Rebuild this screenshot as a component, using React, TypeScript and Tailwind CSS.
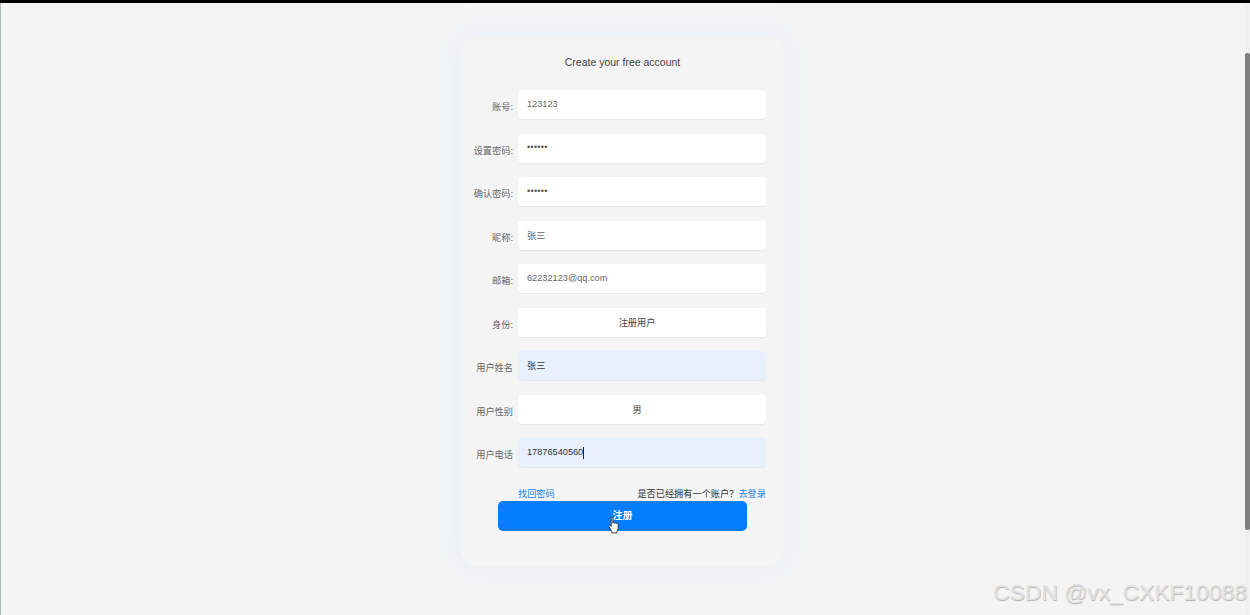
const fontStack = "font-['Liberation_Sans','Noto_Sans_CJK_SC',sans-serif]";

const rows = [
  { label: "账号:", value: "123123", kind: "text" },
  { label: "设置密码:", value: "••••••", kind: "password" },
  { label: "确认密码:", value: "••••••", kind: "password" },
  { label: "昵称:", value: "张三", kind: "text", cjk: true },
  { label: "邮箱:", value: "62232123@qq.com", kind: "text" },
  { label: "身份:", value: "注册用户", kind: "select", cjk: true },
  { label: "用户姓名", value: "张三", kind: "filled", cjk: true },
  { label: "用户性别", value: "男", kind: "select", cjk: true },
  { label: "用户电话", value: "17876540560", kind: "filled", caret: true },
];

function Row({ label, value, kind, caret, cjk }: { label: string; value: string; kind: string; caret?: boolean; cjk?: boolean }) {
  const box =
    kind === "filled"
      ? "bg-[#e8f0fe] text-[#333333] px-[9px]"
      : kind === "select"
        ? "bg-white text-[#444444] justify-center pr-[10px]"
        : "bg-white text-[#666666] px-[9px]";
  return (
    <div className="flex items-center h-[29px]">
      <span className="w-[58px] pr-[5px] pt-[7px] text-right text-[9.2px] leading-none whitespace-nowrap text-[#666666]">{label}</span>
      <div className={`w-[248px] h-[29px] flex items-center rounded-[4px] text-[9.2px] shadow-[0_1px_1px_#e4e9f0] ${box}`}>
        <span className={kind === "password" ? "text-[9px] tracking-[0.3px] text-[#555555]" : cjk ? "pt-[3px]" : ""}>{value}</span>
        {caret && <span className="w-px h-[12px] bg-[#222222]" />}
      </div>
    </div>
  );
}

function HandCursor() {
  return (
    <svg width="12" height="19" viewBox="0 0 12 18" className="absolute left-[110px] top-[15px]">
      <path
        d="M3.2 1.6c0-1.1 1.7-1.1 1.7 0v5.2c.2-1 1.7-1 1.8 0 .2-.8 1.6-.8 1.7.2.3-.7 1.6-.6 1.7.4v4.2c0 1.7-.7 2.6-1.2 3.6v1.2H3.8v-1.3L1 10.2c-.6-1 .6-2 1.5-1.1l.7.9z"
        fill="#ffffff"
        stroke="#333333"
        strokeWidth="0.9"
        strokeLinejoin="round"
      />
    </svg>
  );
}

export default function App() {
  return (
    <div className={`h-[615px] w-[1250px] overflow-hidden flex flex-col bg-[#f4f4f4] ${fontStack}`}>
      <div className="h-[3px] shrink-0 bg-black" />
      <div className="flex-1 flex min-h-0">
        <div className="w-px shrink-0 bg-[#a9bfae]" />
        <main className="relative flex-1 flex justify-center pt-[33px] pr-[1px]">
          <div className="w-[325px] h-[530px] rounded-[18px] bg-[#f4f4f4] shadow-[0_0_22px_10px_#edf1f5] pt-[20px]">
            <h1 className="text-center text-[10.5px] leading-[13px] text-[#444444]">Create your free account</h1>
            <div className="mt-[21px] flex flex-col gap-[14.5px]">
              {rows.map((row) => (
                <Row key={row.label} {...row} />
              ))}
            </div>
            <div className="mt-[22px] ml-[58px] w-[248px] flex justify-between text-[9.2px] leading-[11px]">
              <span className="text-[#1a86e8]">找回密码</span>
              <span className="text-[#333333]">
                是否已经拥有一个账户？<span className="text-[#1a86e8]">去登录</span>
              </span>
            </div>
            <button className="relative mt-[1px] ml-[38px] block w-[249px] h-[30px] pb-[2px] rounded-[5px] bg-[#057dfd] text-white text-[10px] font-bold">
              注册
              <HandCursor />
            </button>
          </div>
          <span className="absolute right-[-2px] bottom-[9px] text-[22.8px] leading-[28px] text-[#e2e2e2] [text-shadow:0.5px_0.5px_1px_#b0b0b0]">
            CSDN @vx_CXKF10088
          </span>
        </main>
        <div className="w-[5px] shrink-0 bg-[#f0f0f0] pt-[50px] pb-[85px]">
          <div className="h-full rounded-[2px] bg-[#7f7f7f]" />
        </div>
      </div>
    </div>
  );
}
